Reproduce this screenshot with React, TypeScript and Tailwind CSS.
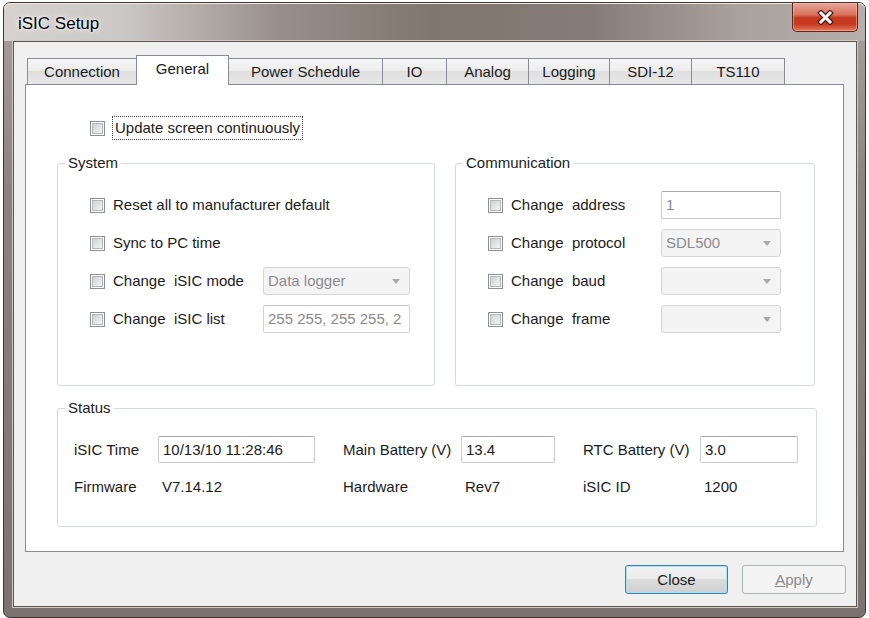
import React from "react";

type Tab = { label: string; w: string; active?: boolean };

const tabs: Tab[] = [
  { label: "Connection", w: "w-[110px]" },
  { label: "General", w: "w-[93px]", active: true },
  { label: "Power Schedule", w: "w-[155px]" },
  { label: "IO", w: "w-[65px]" },
  { label: "Analog", w: "w-[83px]" },
  { label: "Logging", w: "w-[82px]" },
  { label: "SDI-12", w: "w-[83px]" },
  { label: "TS110", w: "w-[94px]" },
];

function Check() {
  return (
    <span className="flex h-[15px] w-[15px] shrink-0 items-center justify-center border border-[#8e8f8f] bg-white">
      <span className="h-[11px] w-[11px] border border-[#b4b8bd] bg-[linear-gradient(135deg,#cfd2d6,#f3f4f5)]" />
    </span>
  );
}

function TextBox({ value, className = "", muted = false }: { value: string; className?: string; muted?: boolean }) {
  return (
    <div
      className={`flex items-center overflow-hidden whitespace-nowrap rounded-[2px] border border-[#c9ccd1] border-t-[#a5a9af] bg-white pl-[4px] ${
        muted ? "text-[#8a8a8a]" : "text-[#1b1b1b]"
      } ${className}`}
    >
      {value}
    </div>
  );
}

function Combo({ value = "", className = "" }: { value?: string; className?: string }) {
  return (
    <div
      className={`flex h-[28px] items-center justify-between rounded-[3px] border border-[#d5d5d5] bg-[#f4f4f4] pl-[4px] pr-[9px] text-[#8c8c8c] ${className}`}
    >
      <span>{value}</span>
      <svg width="8" height="5" viewBox="0 0 8 5">
        <path d="M0 0h8L4 5z" fill="#a9a9a9" />
      </svg>
    </div>
  );
}

function OptionRow({ label, children }: { label: React.ReactNode; children?: React.ReactNode }) {
  return (
    <div className="flex h-[28px] items-center">
      <div className="flex w-[173px] items-center gap-[8px]">
        <Check />
        <span className="whitespace-pre">{label}</span>
      </div>
      {children}
    </div>
  );
}

function Group({ title, className, children }: { title: string; className: string; children: React.ReactNode }) {
  return (
    <fieldset className={`rounded-[3px] border border-[#d5dadf] ${className}`}>
      <legend className="ml-[7px] px-[3px] leading-[18px]">{title}</legend>
      {children}
    </fieldset>
  );
}

export default function App() {
  return (
    <div className="h-[618px] w-[869px] overflow-hidden bg-white pl-[3px] pt-[2px] font-['Liberation_Sans',Arial,sans-serif] text-[15px] leading-[18px] text-[#1b1b1b]">
      <div className="flex h-[616px] w-[863px] flex-col rounded-[7px] border border-[#3d3633] bg-[linear-gradient(to_bottom,#a9a19d,#8d837e_30%,#7d736e)]">
        {/* title bar */}
        <div className="flex h-[38px] shrink-0 items-start justify-between rounded-t-[6px] bg-[linear-gradient(90deg,#d5d2d0_0%,#cbc7c4_14%,#988f8a_32%,#80766f_50%,#867c77_68%,#a9a19d_85%,#b5aeaa_100%)] shadow-[inset_0_1px_0_#ebe8e6]">
          <span className="ml-[14px] mt-[11px] text-[17px] leading-[20px] text-black [text-shadow:0_0_6px_#ffffff,0_0_3px_#ffffff]">
            iSIC Setup
          </span>
          <div className="mr-[7px] flex h-[29px] w-[66px] items-center justify-center rounded-b-[5px] border border-t-0 border-[#5e241a] bg-[linear-gradient(to_bottom,#e9a597_0%,#d9725f_42%,#c53a21_52%,#c7391f_75%,#e27a5e_100%)] shadow-[inset_0_0_0_1px_rgba(255,190,175,0.55)]">
            <svg width="17" height="15" viewBox="0 0 17 15">
              <path d="M4 3l9 9M13 3l-9 9" stroke="#4d1a10" strokeWidth="5.5" strokeLinecap="square" />
              <path d="M4 3l9 9M13 3l-9 9" stroke="#ffffff" strokeWidth="3" strokeLinecap="square" />
            </svg>
          </div>
        </div>

        {/* client area */}
        <div className="flex flex-1 pb-[10px] pl-[9px] pr-[8px]">
          <div className="flex flex-1 flex-col border border-[#5d5652] bg-[#f0f0f0] shadow-[0_0_0_1px_#cdc7c4]">
            <div className="ml-[11px] mt-[13px]">
              {/* tab strip */}
              <div className="flex h-[29px] items-end pl-[2px]">
                {tabs.map((t, i) =>
                  t.active ? (
                    <div
                      key={t.label}
                      className={`relative z-10 -mb-px flex h-[30px] items-center justify-center border border-b-0 border-[#898c95] bg-white pb-[3px] ${t.w} ${i ? "-ml-px" : ""}`}
                    >
                      {t.label}
                    </div>
                  ) : (
                    <div
                      key={t.label}
                      className={`flex h-[26px] items-center justify-center border border-b-0 border-[#898c95] bg-[linear-gradient(to_bottom,#f6f6f6,#ececec_50%,#e0e0e0_50%,#e6e6e6)] pt-[1px] ${t.w} ${i ? "-ml-px" : ""}`}
                    >
                      {t.label}
                    </div>
                  )
                )}
              </div>

              {/* tab page */}
              <div className="h-[468px] w-[819px] border border-[#898c95] bg-white">
                <div className="ml-[64px] mt-[31px] flex h-[24px] items-center">
                  <Check />
                  <span className="ml-[7px] border border-dotted border-[#444] px-[2px] leading-[22px]">
                    Update screen continuously
                  </span>
                </div>

                <div className="ml-[31px] mt-[14px] flex gap-[20px]">
                  <Group title="System" className="h-[232px] w-[378px]">
                    <div className="flex flex-col gap-[10px] pl-[32px] pt-[19px]">
                      <OptionRow label="Reset all to manufacturer default" />
                      <OptionRow label="Sync to PC time" />
                      <OptionRow label="Change  iSIC mode">
                        <Combo value="Data logger" className="w-[147px]" />
                      </OptionRow>
                      <OptionRow label="Change  iSIC list">
                        <TextBox value="255 255, 255 255, 2" muted className="h-[28px] w-[147px] border-[#d2d2d2] border-t-[#c2c2c2]" />
                      </OptionRow>
                    </div>
                  </Group>

                  <Group title="Communication" className="h-[232px] w-[360px]">
                    <div className="flex flex-col gap-[10px] pl-[32px] pt-[19px]">
                      <OptionRow label="Change  address">
                        <TextBox value="1" muted className="h-[28px] w-[120px]" />
                      </OptionRow>
                      <OptionRow label="Change  protocol">
                        <Combo value="SDL500" className="w-[120px]" />
                      </OptionRow>
                      <OptionRow label="Change  baud">
                        <Combo className="w-[120px]" />
                      </OptionRow>
                      <OptionRow label="Change  frame">
                        <Combo className="w-[120px]" />
                      </OptionRow>
                    </div>
                  </Group>
                </div>

                <Group title="Status" className="ml-[31px] mt-[13px] h-[128px] w-[760px]">
                  <div className="pl-[16px] pt-[19px]">
                    <div className="flex h-[27px] items-center">
                      <span className="w-[84px]">iSIC Time</span>
                      <TextBox value="10/13/10 11:28:46" className="h-[27px] w-[157px]" />
                      <span className="ml-[28px] w-[118px]">Main Battery (V)</span>
                      <TextBox value="13.4" className="h-[27px] w-[94px]" />
                      <span className="ml-[28px] w-[117px]">RTC Battery (V)</span>
                      <TextBox value="3.0" className="h-[27px] w-[98px]" />
                    </div>
                    <div className="mt-[10px] flex h-[27px] items-center">
                      <span className="w-[84px]">Firmware</span>
                      <span className="w-[157px] pl-[4px]">V7.14.12</span>
                      <span className="ml-[28px] w-[118px]">Hardware</span>
                      <span className="w-[94px] pl-[4px]">Rev7</span>
                      <span className="ml-[28px] w-[117px]">iSIC ID</span>
                      <span className="pl-[4px]">1200</span>
                    </div>
                  </div>
                </Group>
              </div>
            </div>

            {/* dialog buttons */}
            <div className="mt-[13px] flex justify-end gap-[14px] pr-[10px]">
              <button className="h-[29px] w-[103px] rounded-[3px] border border-[#3c7fb1] bg-[linear-gradient(to_bottom,#f2f2f2,#ebebeb_50%,#dddddd_50%,#cfcfcf)] text-[#1b1b1b] shadow-[inset_0_0_0_1px_#a8e2f6]">
                Close
              </button>
              <button className="h-[29px] w-[104px] rounded-[3px] border border-[#adb2b5] bg-[#f4f4f4] text-[#8a8a8a]">
                <span className="underline">A</span>pply
              </button>
            </div>
          </div>
        </div>
      </div>
    </div>
  );
}
